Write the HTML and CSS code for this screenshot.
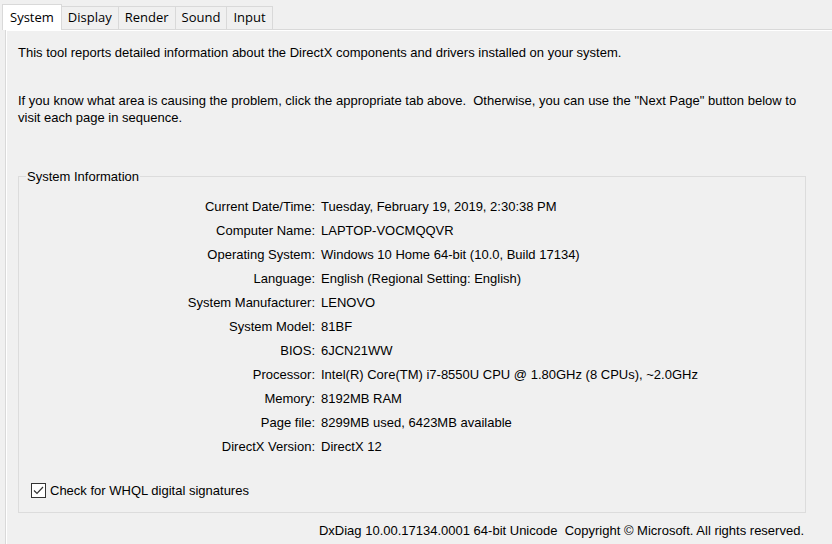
FILE: index.html
```html
<!DOCTYPE html>
<html>
  <head>
    <meta name="viewport" content="width=device-width, initial-scale=1" />
    <link rel="stylesheet" href="styles.css">
  </head>
  <body>
    <div class="tabs">
      <div class="tab active">System</div>
      <div class="tab">Display</div>
      <div class="tab">Render</div>
      <div class="tab">Sound</div>
      <div class="tab">Input</div>
    </div>

    <div class="panel">
      <p class="intro">This tool reports detailed information about the DirectX components and drivers installed on your system.</p>
      <p class="intro second">If you know what area is causing the problem, click the appropriate tab above.&nbsp; Otherwise, you can use the "Next Page" button below to visit each page in sequence.</p>

      <fieldset class="group">
        <legend>System Information</legend>
        <div class="info">
          <span class="label">Current Date/Time:</span><span>Tuesday, February 19, 2019, 2:30:38 PM</span>
          <span class="label">Computer Name:</span><span>LAPTOP-VOCMQQVR</span>
          <span class="label">Operating System:</span><span>Windows 10 Home 64-bit (10.0, Build 17134)</span>
          <span class="label">Language:</span><span>English (Regional Setting: English)</span>
          <span class="label">System Manufacturer:</span><span>LENOVO</span>
          <span class="label">System Model:</span><span>81BF</span>
          <span class="label">BIOS:</span><span>6JCN21WW</span>
          <span class="label">Processor:</span><span>Intel(R) Core(TM) i7-8550U CPU @ 1.80GHz (8 CPUs), ~2.0GHz</span>
          <span class="label">Memory:</span><span>8192MB RAM</span>
          <span class="label">Page file:</span><span>8299MB used, 6423MB available</span>
          <span class="label">DirectX Version:</span><span>DirectX 12</span>
        </div>
        <label class="check">
          <span class="box">
            <svg width="13" height="13" viewBox="0 0 13 13"><path d="M2 6.5 L5 9.5 L11 3" fill="none" stroke="#333" stroke-width="1.2"/></svg>
          </span>
          Check for WHQL digital signatures
        </label>
      </fieldset>

      <div class="footer">DxDiag 10.00.17134.0001 64-bit Unicode&nbsp; Copyright © Microsoft. All rights reserved.</div>
    </div>
  </body>
</html>
```

FILE: styles.css
```css
body {
  margin: 0;
  background-color: #f0f0f0;
  font-family: "Liberation Sans", Arial, sans-serif;
  font-size: 13px;
  color: #000;
  width: 832px;
  height: 544px;
  overflow: hidden;
}

* {
  box-sizing: border-box;
}

/* Tab strip */
.tabs {
  display: flex;
  align-items: flex-end;
  height: 29px;
  padding-left: 2px;
}

.tab {
  height: 23px;
  line-height: 21px;
  padding: 0 6px;
  border: 1px solid #d9d9d9;
  border-bottom: none;
  margin-left: -1px;
  font-family: "Open Sans", "Liberation Sans", sans-serif;
  font-size: 13px;
}

.tab:first-child {
  margin-left: 0;
}

.tab.active {
  height: 26px;
  line-height: 24px;
  padding: 0 7px;
  background-color: #fff;
  margin-bottom: -1px;
  position: relative;
}

/* Page under the tabs */
.panel {
  margin-left: 5px;
  height: 515px;
  border-top: 1px solid #d9d9d9;
  border-left: 1px solid #d9d9d9;
  box-shadow: inset 1px 1px 0 #fff;
  padding: 14px 0 0 12px;
}

.intro {
  margin: 0;
  line-height: 17px;
  width: 790px;
}

.intro.second {
  margin-top: 31px;
}

/* System Information group box */
.group {
  margin: 42px 0 0 0;
  width: 788px;
  height: 345px;
  border: 1px solid #dcdcdc;
  padding: 0 0 0 7px;
}

.group legend {
  padding: 0 1px;
  line-height: 17px;
}

.info {
  display: grid;
  grid-template-columns: 289px 1fr;
  column-gap: 6px;
  grid-auto-rows: 24px;
  align-items: center;
  margin-top: 9px;
}

.label {
  text-align: right;
}

.check {
  display: flex;
  align-items: center;
  gap: 4px;
  margin: 25px 0 0 5px;
}

.box {
  width: 15px;
  height: 15px;
  border: 1px solid #333;
  background-color: #fff;
  display: flex;
  align-items: center;
  justify-content: center;
}

.footer {
  width: 786px;
  text-align: right;
  margin-top: 10px;
}
```
